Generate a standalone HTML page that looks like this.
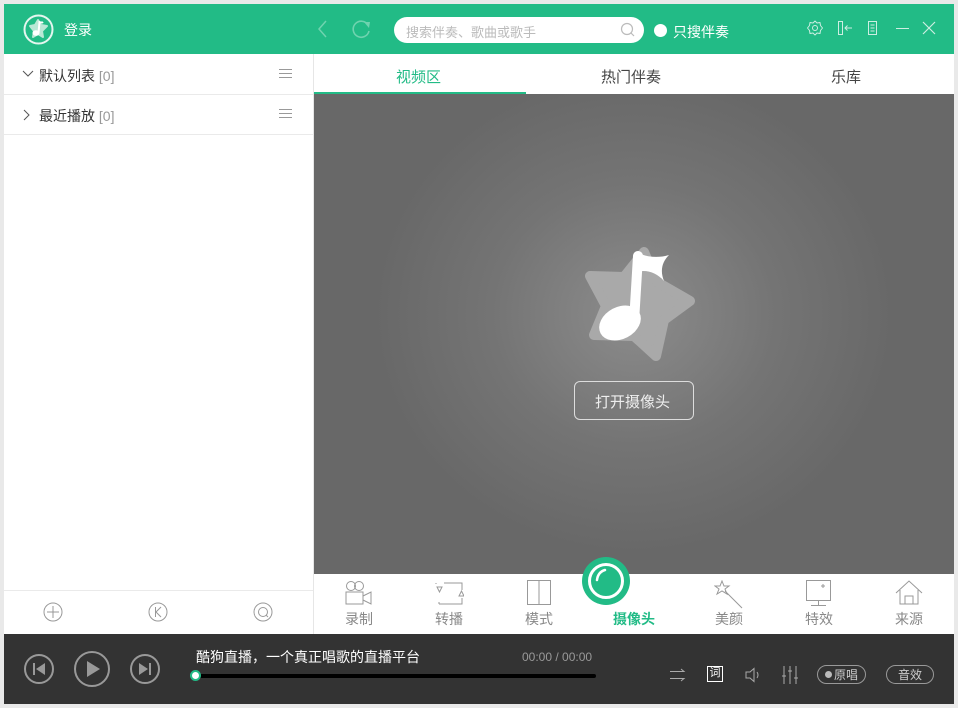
<!DOCTYPE html>
<html><head><meta charset="utf-8"><style>
*{margin:0;padding:0;box-sizing:border-box}
body{width:958px;height:708px;background:#e9e9e9;font-family:"Liberation Sans","Noto Sans CJK SC",sans-serif;position:relative;overflow:hidden}
.a{position:absolute}
#win{left:4px;top:4px;width:950px;height:700px;background:#fff}
#hdr{left:0;top:0;width:950px;height:50px;background:#22bb86}
.t{white-space:nowrap}
</style></head><body>
<div id="win" class="a">
<div id="hdr" class="a">
 <svg class="a" style="left:19px;top:10px" width="31" height="31" viewBox="0 0 31 31"><circle cx="15.5" cy="15.5" r="14" fill="none" stroke="#e4f6ef" stroke-width="2"/><path d="M15 6 L18 11 24 12 19 17 20 23 15 20 10 23 11 17 7 12 12 11Z" fill="#b9e8d6" stroke="#b9e8d6" stroke-linejoin="round" stroke-width="2"/><ellipse cx="13" cy="19" rx="3.5" ry="2.8" fill="#fff"/><path d="M15.5 19 L16.5 8 Q19 9 20 8" stroke="#fff" stroke-width="2" fill="none"/></svg>
 <div class="a t" style="left:60px;top:16px;color:#fff;font-size:14px">登录</div>
 <svg class="a" style="left:312px;top:15px" width="12" height="20"><path d="M10 2 L3 10 L10 18" stroke="#6fd3af" stroke-width="1.5" fill="none"/></svg>
 <svg class="a" style="left:348px;top:15px" width="20" height="20"><path d="M16 6 A8 8 0 1 0 17 12" stroke="#6fd3af" stroke-width="1.6" fill="none"/><path d="M12 3 L18 3 L17 9Z" fill="#6fd3af"/></svg>
 <div class="a" style="left:390px;top:13px;width:250px;height:26px;background:#fff;border-radius:13px"></div>
 <div class="a t" style="left:402px;top:18px;color:#bbb;font-size:13px">搜索伴奏、歌曲或歌手</div>
 <svg class="a" style="left:616px;top:18px" width="16" height="16"><circle cx="7" cy="7" r="5.5" stroke="#bbb" stroke-width="1.2" fill="none"/><path d="M11 11 L14 14" stroke="#bbb" stroke-width="1.2"/></svg>
 <div class="a" style="left:650px;top:20px;width:13px;height:13px;border-radius:50%;background:#fff"></div>
 <div class="a t" style="left:669px;top:18px;color:#fff;font-size:14px">只搜伴奏</div>
 <svg class="a" style="left:802px;top:15px" width="18" height="18"><circle cx="9" cy="9" r="2.5" stroke="#cdeee2" fill="none"/><path d="M9 2 L11 4 L14 3.5 L14.5 6.5 L16.5 9 L14.5 11.5 L14 14.5 L11 14 L9 16 L7 14 L4 14.5 L3.5 11.5 L1.5 9 L3.5 6.5 L4 3.5 L7 4Z" stroke="#cdeee2" fill="none" stroke-linejoin="round"/></svg>
 <svg class="a" style="left:832px;top:15px" width="18" height="18"><rect x="2.5" y="2.5" width="4" height="13" stroke="#cdeee2" fill="none"/><path d="M16 9 L9 9 M11.5 6.5 L9 9 L11.5 11.5" stroke="#cdeee2" fill="none"/></svg>
 <svg class="a" style="left:862px;top:15px" width="14" height="18"><rect x="2.5" y="2.5" width="8" height="13" stroke="#cdeee2" fill="none"/><path d="M4.5 6 h4 M4.5 9 h4 M4.5 12 h4" stroke="#cdeee2"/></svg>
 <div class="a" style="left:892px;top:24px;width:13px;height:1px;background:#cdeee2"></div>
 <svg class="a" style="left:918px;top:17px" width="14" height="14"><path d="M1 1 L13 13 M13 1 L1 13" stroke="#cdeee2" stroke-width="1.2"/></svg>
</div>
<div class="a" style="left:309px;top:50px;width:1px;height:580px;background:#e6e6e6"></div>
<svg class="a" style="left:18px;top:65px" width="12" height="10"><path d="M1 2 L6 7 L11 2" stroke="#555" fill="none"/></svg>
<div class="a t" style="left:35px;top:62px;font-size:14px;color:#333">默认列表 <span style="color:#999">[0]</span></div>
<svg class="a" style="left:275px;top:64px" width="14" height="12"><path d="M0 1.5h13M0 5.5h13M0 9.5h13" stroke="#999"/></svg>
<div class="a" style="left:0;top:90px;width:309px;height:1px;background:#eaeaea"></div>
<svg class="a" style="left:18px;top:105px" width="10" height="12"><path d="M2 1 L7 6 L2 11" stroke="#555" fill="none"/></svg>
<div class="a t" style="left:35px;top:102px;font-size:14px;color:#333">最近播放 <span style="color:#999">[0]</span></div>
<svg class="a" style="left:275px;top:104px" width="14" height="12"><path d="M0 1.5h13M0 5.5h13M0 9.5h13" stroke="#999"/></svg>
<div class="a" style="left:0;top:130px;width:309px;height:1px;background:#eaeaea"></div>
<div class="a" style="left:0;top:586px;width:309px;height:1px;background:#eaeaea"></div>
<svg class="a" style="left:38px;top:597px" width="22" height="22"><circle cx="11" cy="11" r="9" stroke="#999" fill="none"/><path d="M11 5v12M5 11h12" stroke="#999"/></svg>
<svg class="a" style="left:143px;top:597px" width="22" height="22"><circle cx="11" cy="11" r="9" stroke="#999" fill="none"/><path d="M8.5 6v10M14 6L9 11L14 16" stroke="#999" fill="none"/></svg>
<svg class="a" style="left:248px;top:597px" width="22" height="22"><circle cx="11" cy="11" r="9" stroke="#999" fill="none"/><circle cx="11" cy="11" r="4.5" stroke="#999" fill="none"/><path d="M14 14L16 16" stroke="#999"/></svg>
<div class="a t" style="left:392px;top:62px;font-size:15px;color:#22bb86">视频区</div>
<div class="a t" style="left:597px;top:62px;font-size:15px;color:#444">热门伴奏</div>
<div class="a t" style="left:827px;top:62px;font-size:15px;color:#444">乐库</div>
<div class="a" style="left:310px;top:88px;width:212px;height:2px;background:#22bb86"></div>
<div class="a" style="left:310px;top:90px;width:640px;height:480px;background:radial-gradient(ellipse 260px 240px at 320px 220px,#8c8c8c 0%,#747474 55%,#686868 100%)"></div>
<svg class="a" style="left:566px;top:230px" width="140" height="140" viewBox="566 230 140 140"><path d="M640 248 L653 278 L686 297 L660 316 L652 352 L630 332 L590 331 L602 302 L586 272 L620 273Z" fill="#a9a9a9" stroke="#a9a9a9" stroke-width="10" stroke-linejoin="round"/><ellipse cx="616" cy="319" rx="22" ry="16" transform="rotate(-28 616 319)" fill="#fff"/><path d="M630 318 L634 252" stroke="#fff" stroke-width="10" stroke-linecap="round"/><path d="M632 248 Q648 256 665 251 Q654 262 660 277 Q648 264 632 268Z" fill="#fff"/></svg>
<div class="a" style="left:570px;top:377px;width:120px;height:39px;border:1px solid #ddd;border-radius:6px"></div>
<div class="a t" style="left:591px;top:387px;font-size:15px;color:#eee">打开摄像头</div>
<svg class="a" style="left:340px;top:576px" width="30" height="26" fill="none" stroke="#999"><circle cx="7" cy="6" r="4.5"/><circle cx="15" cy="6" r="4.5"/><rect x="2" y="12" width="17" height="12"/><path d="M19 16 L27 12 V24 L19 20"/></svg>
<div class="a t" style="left:341px;top:605px;font-size:14px;color:#888">录制</div>
<svg class="a" style="left:430px;top:576px" width="30" height="26" fill="none" stroke="#999"><path d="M10 3 H28 V10 M2 3 V4 M5 24 H28 V18 M5 22 V24"/><path d="M3 7 L8 7 L5.5 12Z M25 16 L30 16 L27.5 11Z"/></svg>
<div class="a t" style="left:431px;top:605px;font-size:14px;color:#888">转播</div>
<svg class="a" style="left:520px;top:576px" width="30" height="26" fill="none" stroke="#999"><rect x="3.5" y="0.5" width="23" height="24"/><path d="M15 0.5 V24.5"/></svg>
<div class="a t" style="left:521px;top:605px;font-size:14px;color:#888">模式</div>
<div class="a" style="left:578px;top:553px;width:48px;height:48px;border-radius:50%;background:#22bb86"></div>
<div class="a" style="left:584px;top:559px;width:36px;height:36px;border-radius:50%;border:3px solid #fff"></div>
<svg class="a" style="left:590px;top:564px" width="14" height="16"><path d="M11 2 Q4 4 3 12" stroke="#fff" stroke-width="2.5" fill="none" stroke-linecap="round"/></svg>
<div class="a t" style="left:609px;top:605px;font-size:14px;color:#22bb86;font-weight:bold">摄像头</div>
<svg class="a" style="left:710px;top:576px" width="32" height="30" fill="none" stroke="#999"><path d="M8 1 L10 6 L15 6 L11 9 L13 14 L8 11 L3 14 L5 9 L1 6 L6 6Z M11 11 L28 28"/></svg>
<div class="a t" style="left:711px;top:605px;font-size:14px;color:#888">美颜</div>
<svg class="a" style="left:800px;top:576px" width="30" height="28" fill="none" stroke="#999"><rect x="2.5" y="0.5" width="24" height="20"/><path d="M14.5 21 V25 M7 25.5 H22 M19 4 V8 M17 6 H21"/></svg>
<div class="a t" style="left:801px;top:605px;font-size:14px;color:#888">特效</div>
<svg class="a" style="left:890px;top:576px" width="30" height="26" fill="none" stroke="#999"><path d="M2 13 L15 1 L28 13 M6 10 V24 H24 V10 M11 24 V16 H19 V24"/></svg>
<div class="a t" style="left:891px;top:605px;font-size:14px;color:#888">来源</div>
<div class="a" style="left:0;top:630px;width:950px;height:70px;background:#333"></div>
<svg class="a" style="left:18px;top:648px" width="34" height="34" fill="none" stroke="#999" stroke-width="2"><circle cx="17" cy="17" r="14"/><path d="M12 11 V23" /><path d="M23 11 L14 17 L23 23Z" fill="#999" stroke="none"/></svg>
<svg class="a" style="left:68px;top:645px" width="40" height="40" fill="none" stroke="#999" stroke-width="2"><circle cx="20" cy="20" r="17"/><path d="M15 12 L28 20 L15 28Z" fill="#999" stroke="none"/></svg>
<svg class="a" style="left:124px;top:648px" width="34" height="34" fill="none" stroke="#999" stroke-width="2"><circle cx="17" cy="17" r="14"/><path d="M22 11 V23"/><path d="M11 11 L20 17 L11 23Z" fill="#999" stroke="none"/></svg>
<div class="a t" style="left:192px;top:643px;font-size:14px;color:#fff">酷狗直播，一个真正唱歌的直播平台</div>
<div class="a t" style="left:518px;top:646px;font-size:12px;color:#999">00:00 / 00:00</div>
<div class="a" style="left:192px;top:670px;width:400px;height:4px;background:#000;border-radius:2px"></div>
<div class="a" style="left:186px;top:666px;width:11px;height:11px;border-radius:50%;background:#fff;border:2px solid #22bb86"></div>
<svg class="a" style="left:664px;top:662px" width="20" height="18" fill="none" stroke="#aaa"><path d="M2 5.5 H16 L13 3 M2 12.5 H16 L13 15"/></svg>
<div class="a" style="left:703px;top:662px;width:16px;height:16px;border:1.5px solid #fff;color:#fff;font-size:11px;line-height:13px;text-align:center">词</div>
<svg class="a" style="left:740px;top:662px" width="18" height="18" fill="none" stroke="#aaa"><path d="M2 6 H6 L10 2.5 V15.5 L6 12 H2Z M13 6 Q15 9 13 12"/></svg>
<svg class="a" style="left:776px;top:660px" width="20" height="22" fill="none" stroke="#aaa"><path d="M4 2V20M10 2V20M16 2V20M2 12H6M8 7H12M14 14H18"/></svg>
<div class="a" style="left:813px;top:661px;width:49px;height:19px;border:1px solid #999;border-radius:10px"></div>
<div class="a" style="left:821px;top:667px;width:7px;height:7px;border-radius:50%;background:#bbb"></div>
<div class="a t" style="left:830px;top:662px;font-size:12px;color:#ccc">原唱</div>
<div class="a" style="left:882px;top:661px;width:48px;height:19px;border:1px solid #999;border-radius:10px"></div>
<div class="a t" style="left:894px;top:662px;font-size:12px;color:#ccc">音效</div>
</div>
</body></html>
